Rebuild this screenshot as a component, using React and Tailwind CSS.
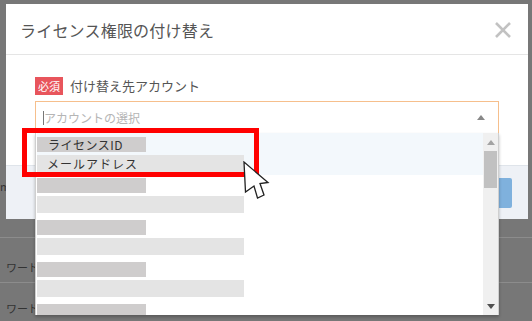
import React from "react";

const options = [
  { hover: true, id: "ライセンスID", mail: "メールアドレス" },
  { hover: false },
  { hover: false },
  { hover: false },
  { hover: false },
];

function Option({ hover, id, mail }) {
  return (
    <div
      className={
        hover
          ? "h-[42px] shrink-0 flex flex-col pt-[4px] bg-[#f3f8fc]"
          : "h-[42px] shrink-0 flex flex-col pt-[3px]"
      }
    >
      <div className="w-[109px] h-[15px] bg-[#cfcdcd] pl-[11px] text-[12px] leading-[15px] text-[#333] tracking-[0.5px]">
        {id || ""}
      </div>
      <div className="mt-[3px] w-[207px] h-[17px] bg-[#e4e4e4] pl-[10px] text-[12px] leading-[17px] text-[#333] tracking-[1px]">
        {mail || ""}
      </div>
    </div>
  );
}

export default function App() {
  return (
    <div className="relative w-[532px] h-[321px] overflow-hidden bg-[#777777] font-['Noto_Sans_CJK_JP','Noto_Sans',sans-serif]">
      {/* dimmed page behind the modal */}
      <div className="flex flex-col pt-[178px] text-[11px] text-[#333]">
        <div className="h-[16px] leading-[16px] pl-0">m</div>
        <div className="h-[43px]" />
        <div className="h-[45px] border-t border-[#8c8c8c] pt-[21px]">
          <div className="h-[16px] leading-[16px] pl-[6px] whitespace-nowrap">ワード</div>
        </div>
        <div className="h-[45px] border-t border-[#8c8c8c] pt-[17px]">
          <div className="h-[16px] leading-[16px] pl-[6px] whitespace-nowrap">ワード</div>
        </div>
      </div>

      {/* modal */}
      <div className="absolute left-[6px] top-[4px] w-[522px] bg-white flex flex-col">
        <div className="h-[51px] flex items-center justify-between pl-[14px] pr-[16px] border-b border-[#e5e5e5]">
          <span className="text-[16px] leading-none text-[#555] pt-[1px] tracking-[0.2px]">ライセンス権限の付け替え</span>
          <svg width="18" height="18" viewBox="0 0 18 18" className="mt-[1px]">
            <path d="M2 2 L16 16 M16 2 L2 16" stroke="#c2c2c2" strokeWidth="2.6" strokeLinecap="butt" />
          </svg>
        </div>

        <div className="h-[110px] pt-[22px] px-[29px] flex flex-col">
          <div className="flex items-center h-[18px]">
            <span className="w-[28px] h-[18px] bg-[#e8555c] text-white text-[11px] leading-[18px] text-center">必須</span>
            <span className="ml-[7px] text-[13px] text-[#555] leading-[18px]">付け替え先アカウント</span>
          </div>
          <div className="relative mt-[6px] h-[33px] border border-[#f6bf8c] flex items-center pl-[7px] pr-[13px]">
            <span className="w-px h-[14px] bg-[#777]" />
            <span className="text-[12px] text-[#b5b5b5] leading-none">アカウントの選択</span>
            <svg width="8" height="5" viewBox="0 0 8 5" className="ml-auto">
              <path d="M0 5 L4 0 L8 5 Z" fill="#888" />
            </svg>

            {/* dropdown menu */}
            <div className="absolute left-[-1px] right-[-1px] top-full h-[182px] bg-white border-x border-[#cfcfcf] flex shadow-[0_2px_3px_rgba(0,0,0,0.25)]">
              <div className="flex-1 flex flex-col overflow-hidden pl-[1px]">
                {options.map((o, i) => (
                  <Option key={i} {...o} />
                ))}
              </div>
              <div className="w-[15px] bg-[#f0f0f0] flex flex-col items-center">
                <div className="h-[18px] flex items-center justify-center">
                  <svg width="8" height="5" viewBox="0 0 8 5">
                    <path d="M0 5 L4 0 L8 5 Z" fill="#a3a3a3" />
                  </svg>
                </div>
                <div className="w-[13px] h-[37px] bg-[#c1c1c1]" />
                <div className="flex-1" />
                <div className="h-[18px] flex items-center justify-center">
                  <svg width="8" height="5" viewBox="0 0 8 5">
                    <path d="M0 0 L8 0 L4 5 Z" fill="#505050" />
                  </svg>
                </div>
              </div>
            </div>
          </div>
        </div>

        <div className="h-[54px] bg-[#eef1f6] border-t border-[#dfe4ea] flex items-center justify-end pr-[16px]">
          <div className="w-[80px] h-[30px] bg-[#7fb1dd] rounded-[2px]" />
        </div>
      </div>

      {/* red annotation box */}
      <div className="absolute left-[22px] top-[128px] w-[237px] h-[49px] border-[5px] border-[#ff0000]" />

      {/* mouse pointer */}
      <svg className="absolute left-[243px] top-[161px]" width="28" height="40" viewBox="0 0 28 40">
        <path
          d="M1 1 L2.5 31 L11 25 L14.5 37 L21 34 L17 22.5 L25 21.5 Z"
          fill="#ffffff"
          stroke="#222"
          strokeWidth="1.3"
          strokeLinejoin="miter"
        />
      </svg>
    </div>
  );
}
